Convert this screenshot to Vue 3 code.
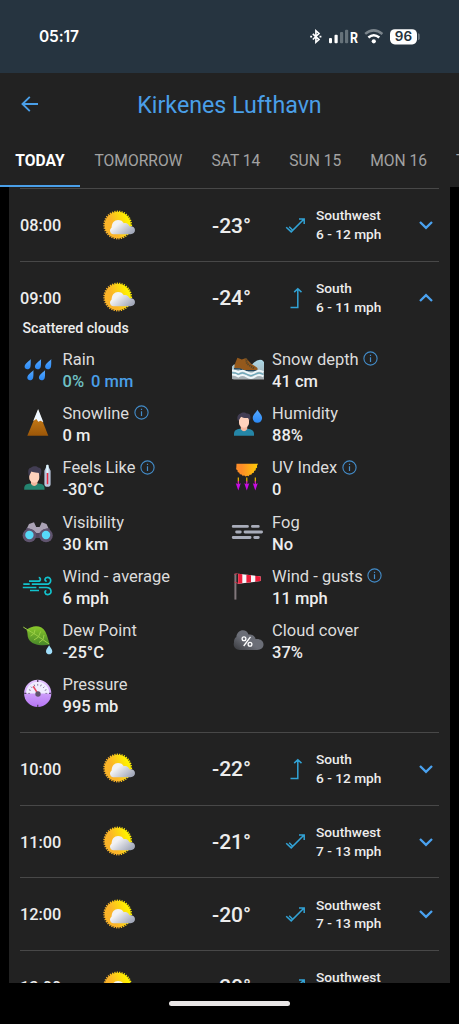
<script setup>
const tabs = ['TODAY', 'TOMORROW', 'SAT 14', 'SUN 15', 'MON 16', 'TUE 17']
const hours = [
  { time: '08:00', temp: '-23°', dir: 'Southwest', speed: '6 - 12 mph' },
  { time: '09:00', temp: '-24°', dir: 'South', speed: '6 - 11 mph', open: true },
  { time: '10:00', temp: '-22°', dir: 'South', speed: '6 - 12 mph' },
  { time: '11:00', temp: '-21°', dir: 'Southwest', speed: '7 - 13 mph' },
  { time: '12:00', temp: '-20°', dir: 'Southwest', speed: '7 - 13 mph' },
  { time: '13:00', temp: '-20°', dir: 'Southwest', speed: '7 - 13 mph' },
]
const details = [
  { icon: 'rain', label: 'Rain', value: '0 mm', chance: '0%' },
  { icon: 'snow', label: 'Snow depth', value: '41 cm', info: true },
  { icon: 'peak', label: 'Snowline', value: '0 m', info: true },
  { icon: 'humidity', label: 'Humidity', value: '88%' },
  { icon: 'feels', label: 'Feels Like', value: '-30°C', info: true },
  { icon: 'uv', label: 'UV Index', value: '0', info: true },
  { icon: 'visibility', label: 'Visibility', value: '30 km' },
  { icon: 'fog', label: 'Fog', value: 'No' },
  { icon: 'wind', label: 'Wind - average', value: '6 mph' },
  { icon: 'gusts', label: 'Wind - gusts', value: '11 mph', info: true },
  { icon: 'dew', label: 'Dew Point', value: '-25°C' },
  { icon: 'cloud', label: 'Cloud cover', value: '37%' },
  { icon: 'pressure', label: 'Pressure', value: '995 mb' },
]
const drops = [[4.3, 7], [14.6, 7], [24.8, 7], [7, 18], [18.6, 18]]
const ticks = [-90, -67, -45, -22, 0, 22, 45, 67, 90]
</script>

<template>
  <div class="phone">
    <svg class="defs" width="0" height="0">
      <defs>
        <linearGradient id="sunFill" x1="0" y1=".6" x2="1" y2=".2"><stop offset=".3" stop-color="#fbb429" /><stop offset=".85" stop-color="#fff000" /></linearGradient>
        <linearGradient id="cloudFill" x1="0" y1="0" x2="1" y2=".7"><stop offset=".35" stop-color="#f2f2f4" /><stop offset="1" stop-color="#a3a9ba" /></linearGradient>
        <linearGradient id="peakFill" x1="0" y1="0" x2="0" y2="1"><stop offset="0" stop-color="#d88a1c" /><stop offset="1" stop-color="#9b5608" /></linearGradient>
        <linearGradient id="uvFill" x1="0" y1="0" x2="1" y2="0"><stop offset=".25" stop-color="#fd8c28" /><stop offset="1" stop-color="#ffce05" /></linearGradient>
        <linearGradient id="waterFill" x1="0" y1="0" x2="0" y2="1"><stop offset="0" stop-color="#acd9e8" /><stop offset="1" stop-color="#a4aaae" /></linearGradient>
        <linearGradient id="leafFill" x1="0" y1="0" x2="0" y2="1"><stop offset="0" stop-color="#8bc92b" /><stop offset="1" stop-color="#47862a" /></linearGradient>
        <linearGradient id="darkCloud" x1="0" y1="1" x2="1" y2="0"><stop offset="0" stop-color="#37383c" /><stop offset=".45" stop-color="#6b6e77" /></linearGradient>
        <linearGradient id="gaugeFill" x1="0" y1="0" x2="0" y2="1"><stop offset="0" stop-color="#e5c7ff" /><stop offset="1" stop-color="#b675f5" /></linearGradient>
        <linearGradient id="dropFill" x1="0" y1="0" x2="0" y2="1"><stop offset="0" stop-color="#57aaff" /><stop offset="1" stop-color="#2a88f4" /></linearGradient>
      </defs>
    </svg>

    <div class="status">
      <span class="clock">05:17</span>
      <svg class="status-icons" width="112" height="20" viewBox="0 0 112 20">
        <path d="M3.8 6.8l6.2 5.8-3.1 2.7V3.7L10 6.5l-6.2 6" fill="none" stroke="#fff" stroke-width="1.6" />
        <path d="M1.2 9.6h1.9M10.5 9.6h1.9" stroke="#fff" stroke-width="1.8" />
        <rect x="20" y="11.1" width="3" height="5.2" rx="1" fill="#fff" />
        <rect x="25.5" y="7.8" width="3.2" height="8.5" rx="1" fill="#fff" />
        <rect x="31" y="4.9" width="3.2" height="11.4" rx="1" fill="#66727a" />
        <rect x="36" y="2.8" width="3.2" height="13.5" rx="1" fill="#66727a" />
        <text x="41" y="16.2" class="roam" textLength="8" lengthAdjust="spacingAndGlyphs">R</text>
        <path d="M56.2 6.9q8.4-7 17.2 0" fill="none" stroke="#7b858c" stroke-width="2.5" />
        <path d="M59.4 10.5q5.4-4.5 10.9 0" fill="none" stroke="#fff" stroke-width="2.5" />
        <circle cx="64.8" cy="14.3" r="2.1" fill="#fff" />
        <rect x="81" y="2.2" width="27" height="15.2" rx="4.8" fill="#fff" />
        <path d="M109.2 6.2q1.4.4 1.4 1.6v3.8q0 1.2-1.4 1.6z" fill="#7b858c" />
        <text x="94.4" y="14.4" text-anchor="middle" class="battery">96</text>
      </svg>
    </div>

    <header class="header">
      <svg class="back" width="18" height="16" viewBox="0 0 18 16"><path d="M8.8 .9L1.5 8l7.3 7.1M1.5 8H17" fill="none" stroke="#4a9fe8" stroke-width="1.9" /></svg>
      <h1>Kirkenes Lufthavn</h1>
    </header>
    <nav class="tabs">
      <span v-for="(tab, i) in tabs" :key="tab" :class="['tab', { active: i === 0 }]">{{ tab }}</span>
    </nav>

    <main class="list">
      <section v-for="hour in hours" :key="hour.time" :class="['hour', { open: hour.open }]">
        <div class="row">
          <span class="time">{{ hour.time }}</span>
          <svg class="sun" width="36" height="36" viewBox="0 0 36 36">
            <circle cx="17.7" cy="18" r="13.2" fill="url(#sunFill)" />
            <circle cx="17.7" cy="18" r="13.6" fill="none" stroke="url(#sunFill)" stroke-width="1.6" stroke-dasharray="1.25 1.16" />
            <path d="M13.5 27.2c-2 0-3.5-1.5-3.5-3.4 0-1.3.7-2.4 1.6-3.2.1-4.9 2.8-7.7 6.4-7.7 2.8 0 4.8 1.2 5.8 3.4 2.5-.8 5 .6 5.7 3 3-.5 5.5 1.2 5.5 3.8 0 2.4-1.8 4.1-4.5 4.1z" fill="url(#cloudFill)" />
          </svg>
          <span class="temp">{{ hour.temp }}</span>
          <svg class="direction" width="24" height="24" viewBox="0 0 24 24" fill="none" stroke="#32a3d6" stroke-width="1.5">
            <path v-if="hour.dir === 'Southwest'" d="M4.2 13.2l5 4.7L21.8 5.2M17 5h5.2v5.1M7.2 12.8l3 3" />
            <path v-else d="M8.5 21.4h7.3V2.8M12.2 6.1l3.6-3.4 3.7 3.4" />
          </svg>
          <span class="wind"><span>{{ hour.dir }}</span><span>{{ hour.speed }}</span></span>
          <svg class="chevron" width="14" height="10" viewBox="0 0 14 10"><path :d="hour.open ? 'M1 8l6-5.8L13 8' : 'M1 2l6 5.8L13 2'" fill="none" stroke="#4aa2f0" stroke-width="2.3" /></svg>
        </div>

        <template v-if="hour.open">
          <p class="summary">Scattered clouds</p>
          <div class="details">
            <div v-for="d in details" :key="d.label" class="detail">
              <svg class="icon" width="36" height="36" viewBox="0 0 36 36">
                <g v-if="d.icon === 'rain'" fill="url(#dropFill)">
                  <path v-for="(p, i) in drops" :key="i" :transform="`translate(${p[0]} ${p[1]})`" d="M6.5 0C5.5 1.6.4 4.5.3 7.6c0 3.6 5 3.6 5.8.3C6.8 5 6.200 2.100 6.500 0z" />
                </g>
                <g v-else-if="d.icon === 'snow'">
                  <path d="M2 14.5q2-3 5-2 8-3 15 0 5-6 10-4.500l2 2v17.400H4L2 27z" fill="url(#waterFill)" />
                  <path d="M7.4 5.7l4.4 1.8 4.2-1.6 5.2 5.8 5.4 3.5c1.3.9 1.5 2.8 0 3.3H13.5l-3.7-2-5.5.2c-.3-4 1.8-7.2 3.1-11z" fill="#94591c" />
                  <path d="M16 6.2l1 5.5 7.5 5" fill="none" stroke="#50432a" stroke-width="2" stroke-dasharray="1.2 .9" />
                  <path d="M4 16.7l6 .2 4 1.7h13.5" stroke="#24445a" stroke-width="1.4" fill="none" />
                  <path d="M2 18.5q4 0 6.3 1.7 4.3-3 8.3 0 4.5 3 8.4 0 4-2.7 8.4 0M2 22.4q4 0 6.3 2 4.3-3 8.3 0 4.5 3 8.4 0 4-2.7 8.4 0" fill="none" stroke="#eef7fa" stroke-width="2" />
                  <path d="M2.2 20.8q3.8-.2 6 1.5 4.3-3 8.3 0 4.5 3 8.4 0 4-2.7 8.4 0" fill="none" stroke="#62a9be" stroke-width="1" />
                </g>
                <g v-else-if="d.icon === 'peak'">
                  <path d="M18.1 4L7.3 29.8h21z" fill="url(#peakFill)" />
                  <path d="M18.1 3l5.3 13.3-2.9-1.6-2.2 1-2-2.6-3.1 1.9z" fill="#eff7ff" />
                </g>
                <g v-else-if="d.icon === 'humidity'">
                  <path d="M4 29.7v-2c0-3.2 2.3-4.6 6-5h7.5c4 .4 6.5 2 6.5 5v2z" fill="#2586a7" />
                  <path d="M10.8 19h6.4v4.3q-3.2 4-6.4 0z" fill="#f5b8a0" /><rect x="9" y="9.5" width="10" height="12.2" rx="4.8" fill="#ffd2bd" />
                  <path d="M8 15.2c-1.4-3.8-.3-6.7 2.2-7.4 2-2 5.3-1.5 6.5-.2 3.5-.5 4.8 3 3.1 7.5-.8-1.4-.8-2.7-1.7-3.2-3 .5-5.3-.2-7-1.2z" fill="#423d53" />
                  <path d="M27.4 3.7c-1.4 2.9-4.7 5-4.7 8.4a4.7 4.7 0 0 0 9.4 0c0-3.4-3.3-5.5-4.7-8.4z" fill="url(#dropFill)" />
                </g>
                <g v-else-if="d.icon === 'feels'">
                  <path d="M4.2 29.8v-1.7c0-3 2.2-4.4 5.7-4.7h8.8c3.6.3 5.8 1.7 5.8 4.7v1.7z" fill="#24836f" />
                  <path d="M11 20h6.4v4q-3.2 3.8-6.4 0z" fill="#f2b69d" /><rect x="9.2" y="10" width="10.1" height="12.7" rx="4.8" fill="#ffd2bd" />
                  <path d="M9 16.3C7.6 11.5 8.2 8 10.8 7.7c3-2 6-1.6 7.4-.1 3.5 0 4.2 4.3 1.8 8.8-.7-1.4-.6-3-1.5-3.7-3 .3-5-.4-7.1-1.1z" fill="#423d53" />
                  <path d="M25.9 7.4q1.5-5.6 3 0l1.7 3.4v13.6q-.2 2.3-3.1 2.3t-3.1-2.3V10.8z" fill="#b9c5dc" />
                  <path d="M26.3 4.9h2.2v8h-2.2z" fill="#dff7ff" /><path d="M27.5 13v11.2" stroke="#e9273d" stroke-width="1.5" />
                </g>
                <g v-else-if="d.icon === 'uv'">
                  <path d="M6.5 3.8h21.6l-1.2 2 .3 1.8-1.4 1-.1 1.7-1.6.8-.3 1.7-1.7.4-.8 1.5-1.7.1-1 1.4-1.5-.4-1.5.8-1.3-1-1.8.2-.9-1.4-1.8-.1-.5-1.6-1.6-.6-.2-1.8-1.4-1 .2-1.8z" fill="url(#uvFill)" />
                  <g v-for="x in [8.3, 16.8, 25.3]" :key="x"><path :d="`M${x} 17.6v4`" stroke="#ffc500" stroke-width="1.1" /><path :d="`M${x} 21v5`" stroke="#eb20c2" stroke-width="1.1" /><path :d="`M${x - 2.5} 23.3l2.5 1 2.5-1-2.5 7.2z`" fill="#c60be6" /></g>
                </g>
                <g v-else-if="d.icon === 'visibility'">
                  <path d="M9 9l5-1.7 2.2 4.6h3.4l2.2-4.6L26.5 9l5.2 11h-28z" fill="#aaa2b5" />
                  <path d="M6.4 13q6 .3 10 5h3q4-4.7 10-5l2 7-11 3h-6L4 20z" fill="#50475f" />
                  <circle cx="9.4" cy="20.5" r="6.8" fill="#60546e" /><circle cx="26" cy="20.5" r="6.8" fill="#60546e" />
                  <circle cx="9.4" cy="20" r="4.2" fill="#57d9f7" /><circle cx="26" cy="20" r="4.2" fill="#57d9f7" />
                </g>
                <path v-else-if="d.icon === 'fog'" d="M3.2 11.4h14.3M22.4 11.4h5.9M6.6 17h3.7M15 17h16.6M3.2 22.5h16.9M24.7 22.5h3.6" stroke="#a9adba" stroke-width="2.8" stroke-linecap="round" />
                <path v-else-if="d.icon === 'wind'" d="M9 12.2h9.3c2.6 0 2.8-3.5.4-3.7M3.3 15.2h6.4M11.8 15.2h14.4c5.5 0 6-6.8 1.2-6.8-2.6 0-3.5 3.7-.7 3.8M2.8 18.5h13.6M18.8 18.5h7.7c5.6 0 6 7.2 1.2 7.2-2.7 0-3.8-3.8-1.3-4.1M10 21.5h9" fill="none" stroke="#12c3cd" stroke-width="1.7" />
                <g v-else-if="d.icon === 'gusts'">
                  <path d="M5.4 4.6v26" stroke="#81777b" stroke-width="2" /><path d="M4.5 5.5l3-1M4.5 13l4 1.5" stroke="#ca344d" />
                  <path d="M8.2 4.8L30.7 7.4v4.7L8.2 14.7z" fill="#f7f7fb" /><path d="M8.2 4.8l4.1.5v9l-4.1.4zM16.4 5.8l4.6.5v6.9l-4.6.5zM25.3 6.8l5.4.6v4.7l-5.4.6z" fill="#ec1c39" />
                </g>
                <g v-else-if="d.icon === 'dew'">
                  <path d="M6.5 7C13 1.6 21.8 2 25.4 8.8c2.2 4.5 2.7 8 4.4 12.7-8 1.7-18.2.4-21.2-5.6C7 12.3 8.2 10 6.5 7z" fill="url(#leafFill)" />
                  <path d="M3.3 4.1l12.6 7.7 13 9M14 10.7l1-4M18.6 13.5l2-5M13.5 11l-3 2M18.5 14l-4.6 3M23 16.5l-4 3M23 16.5l1-4.5" fill="none" stroke="#9bcf46" stroke-width="1" />
                  <path d="M29.1 22.2c-1 2.4-3.1 3.6-3.1 6 0 4.2 6.3 4.2 6.3 0 0-2.3-2.2-3.7-3.2-6z" fill="#a1dffa" />
                </g>
                <g v-else-if="d.icon === 'cloud'">
                  <path d="M10 27C5.4 27 2.8 23.3 4 19.4c-.2-3.2 1.4-5 2.3-5.1C7 5.4 17 5.5 18.5 11.6c4-1 6.7 1.5 7 4.5 4.5-.6 8 1.6 8 5.5 0 3.6-3.1 5.7-7.2 5.4z" fill="url(#darkCloud)" />
                  <path d="M20.5 13.8L13.7 23" stroke="#fff" stroke-width="1.3" /><circle cx="14" cy="15.7" r="1.9" fill="none" stroke="#fff" stroke-width="1.3" /><circle cx="20" cy="21.3" r="1.9" fill="none" stroke="#fff" stroke-width="1.3" />
                </g>
                <g v-else>
                  <circle cx="17.7" cy="16.4" r="13.6" fill="url(#gaugeFill)" /><path d="M6 16.4a11.7 11.7 0 0 1 23.4 0z" fill="#f0edff" />
                  <path v-for="a in ticks" :key="a" d="M17.7 6.9v1.8" :transform="`rotate(${a} 17.7 16.4)`" stroke="#7b688f" stroke-width=".8" />
                  <path d="M4.2 16.4h2.2M29 16.4h2.2M17.7 2.9v2.2M17.7 27.7v2.2" stroke="#574768" stroke-width="1.4" />
                  <path d="M17.7 16.4l-4.5-7.1" stroke="#e84c64" stroke-width="1.6" /><circle cx="18" cy="17" r="2.7" fill="#60536d" />
                </g>
              </svg>
              <div class="copy">
                <span class="label">{{ d.label }}
                  <svg v-if="d.info" class="info" width="15" height="15" viewBox="0 0 15 15" fill="none" stroke="#438cc9" stroke-width="1.1"><circle cx="7.5" cy="7.5" r="6.6" /><path d="M7.5 6.3V11M7.5 3.7V5" stroke-width="1.2" /></svg>
                </span>
                <span class="value"><span v-if="d.chance" class="chance">{{ d.chance }}</span><span :class="{ blue: d.chance }">{{ d.value }}</span></span>
              </div>
            </div>
          </div>
        </template>
      </section>
    </main>
    <footer class="footer"><span class="handle"></span></footer>
  </div>
</template>

<style>
html, body { margin: 0; background: #000; }
</style>

<style scoped>
* { box-sizing: border-box; }
.phone { width: 459px; height: 1024px; display: flex; flex-direction: column; overflow: hidden; background: #000; color: #ededed; font-family: Roboto, sans-serif; }
.defs { position: absolute; }
svg { display: block; flex: none; }
.status { height: 73px; flex: none; display: flex; justify-content: space-between; align-items: center; padding: 0 38px 0 39px; background: #263440; }
.clock { font: 600 15.5px/20px Inter, sans-serif; color: #fff; letter-spacing: -.1px; }
.roam { font: 700 15.5px Roboto, sans-serif; fill: #fff; }
.battery { font: 600 13.5px Inter, sans-serif; fill: #25323c; }
.header { height: 61px; flex: none; display: grid; grid-template-columns: 60px 1fr 60px; align-items: center; background: #222; color: #4a9fe8; }
.back { margin-left: 21px; }
h1 { margin: 2px 0 0; font-size: 23.2px; line-height: 30px; font-weight: 400; text-align: center; white-space: nowrap; }
.tabs { height: 53px; flex: none; display: flex; background: #222; overflow: hidden; }
.tab { flex: none; padding: 0 14.5px; height: 53px; line-height: 55px; font-size: 15.6px; color: #a3a3a3; white-space: nowrap; }
.tab.active { width: 80px; padding: 0; text-align: center; color: #fff; font-weight: 700; border-bottom: 2.5px solid #4a9fe8; }
.list { height: 796px; flex: none; margin: 0 9px; padding: 1px 11px 0; overflow: hidden; background: #222; }
.hour { height: 72.7px; border-top: 1px solid #484848; }
.hour.open { height: 471.2px; }
.row { height: 72px; display: grid; grid-template-columns: 80px 112px 70px 34px 98px 25px; align-items: center; }
.time { font-size: 16.3px; font-weight: 500; padding-top: 1px; }
.temp { font-size: 21px; font-weight: 500; padding-top: 1px; }
.wind { display: flex; flex-direction: column; font-size: 13.7px; line-height: 18.7px; font-weight: 500; white-space: nowrap; }
.direction { margin-top: 1px; }
.sun { margin-top: -1px; }
.chevron { margin-left: 5px; }
.summary { margin: -14.5px 0 0 2.5px; font-size: 14.1px; line-height: 18px; font-weight: 500; }
.details { margin-top: 10px; display: grid; grid-template-columns: 209.6px 209px; grid-auto-rows: 54.3px; }
.detail { display: flex; gap: 6.5px; }
.icon { margin-top: 4.5px; }
.copy { display: flex; flex-direction: column; margin-top: 1.5px; font-size: 16.5px; line-height: 22px; white-space: nowrap; }
.label { display: flex; align-items: center; gap: 4.5px; color: #dcdcdc; }
.label .info { margin-top: -2px; }
.value { display: flex; gap: 7px; font-weight: 500; }
.chance { color: #6fc1c5; }
.blue { color: #4a9fe8; }
.footer { flex: 1; display: flex; justify-content: center; align-items: center; }
.handle { width: 121px; height: 4.5px; border-radius: 3px; background: #e9e6e6; }
</style>
